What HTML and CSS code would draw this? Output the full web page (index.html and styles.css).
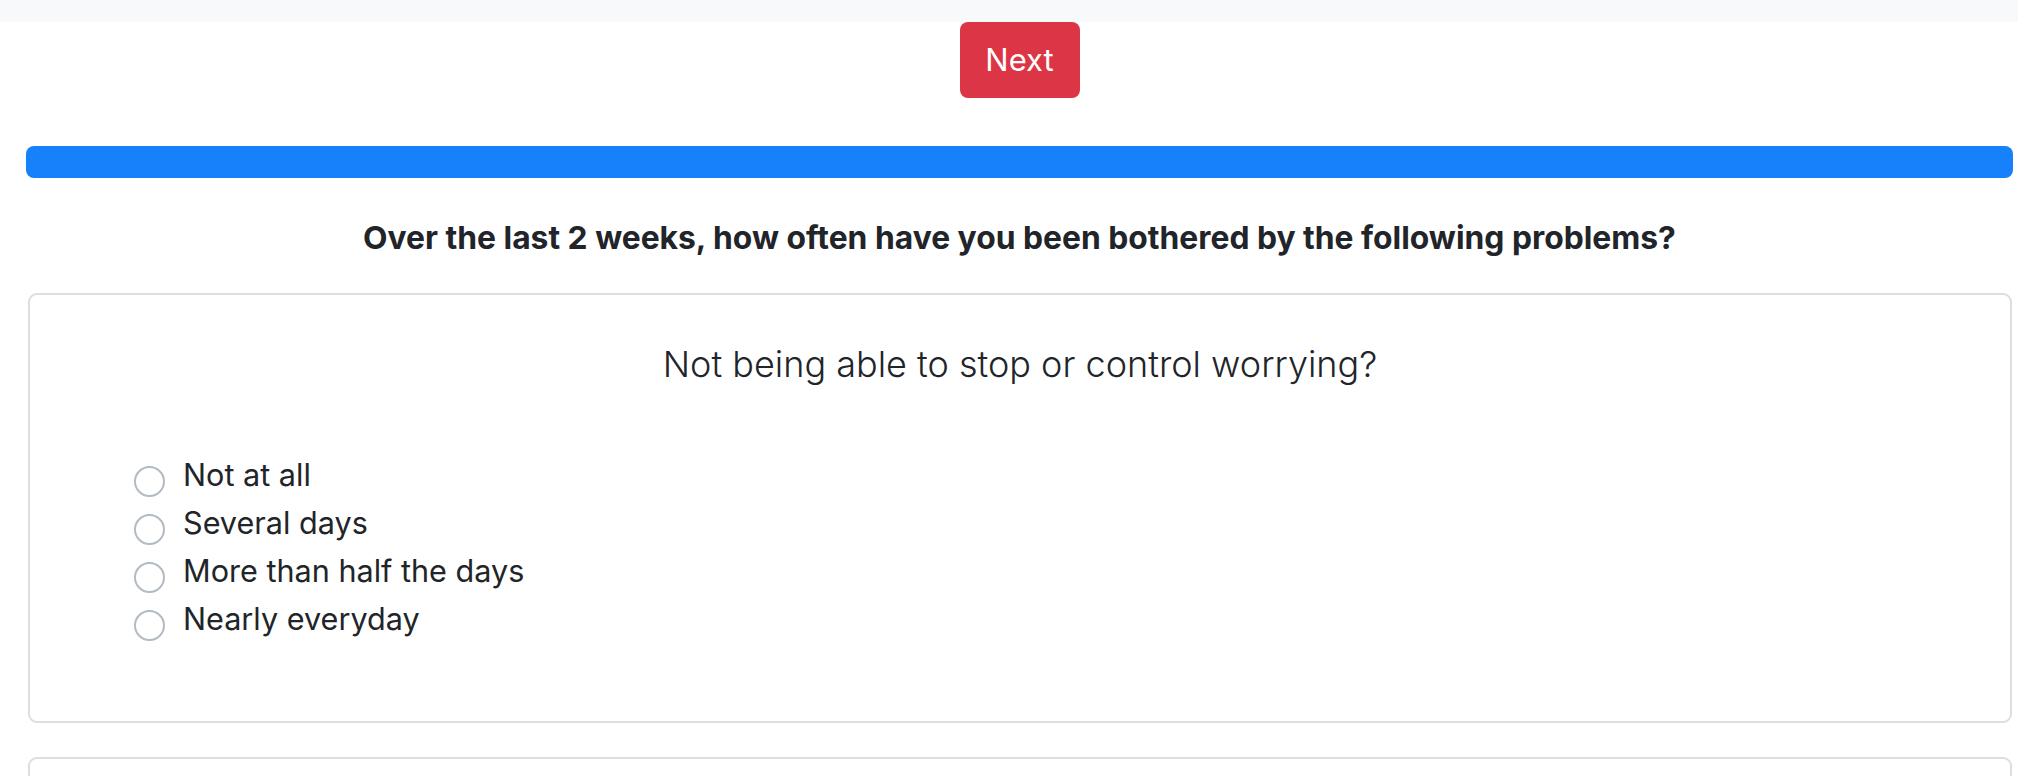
FILE: index.html
```html
<!DOCTYPE html>
<html lang="en">
<head>
<meta charset="utf-8">
<title>Questionnaire</title>
<link rel="stylesheet" href="styles.css">
</head>
<body>
<div class="topbar"></div>
<div class="actions">
  <button class="btn-next" type="button">Next</button>
</div>
<main class="content">
  <div class="progress"><div class="progress-bar" style="width:100%"></div></div>
  <h2 class="intro">Over the last 2 weeks, how often have you been bothered by the following problems?</h2>
  <section class="card">
    <h3 class="question">Not being able to stop or control worrying?</h3>
    <div class="options">
      <label class="option"><input type="radio" name="q1" class="radio"><span>Not at all</span></label>
      <label class="option"><input type="radio" name="q1" class="radio"><span>Several days</span></label>
      <label class="option"><input type="radio" name="q1" class="radio"><span>More than half the days</span></label>
      <label class="option"><input type="radio" name="q1" class="radio"><span>Nearly everyday</span></label>
    </div>
  </section>
  <section class="card card-next"></section>
</main>
</body>
</html>
```
FILE: styles.css
```css
* { box-sizing: border-box; }
html, body {
  margin: 0;
  padding: 0;
  background: #fff;
  color: #212529;
  font-family: Inter, "Noto Sans", "Liberation Sans", sans-serif;
}
.topbar {
  height: 22px;
  background: #f8f9fa;
}
.actions {
  display: flex;
  justify-content: center;
  padding-left: 21px;
}
.btn-next {
  width: 120px;
  height: 76px;
  border: none;
  border-radius: 8px;
  background: #dc3545;
  color: #fff;
  font-family: inherit;
  font-size: 31px;
  line-height: 48px;
  padding: 0;
}
.content {
  padding: 48px 5px 0 26px;
}
.progress {
  height: 32px;
  border-radius: 8px;
  background: #e9ecef;
  overflow: hidden;
}
.progress-bar {
  height: 100%;
  background: #1781fb;
}
.intro {
  margin: 36px 0 31px;
  text-align: center;
  font-size: 31.8px;
  line-height: 48px;
  font-weight: 700;
}
.card {
  margin: 0 1px 34px 2px;
  border: 2px solid #dedede;
  border-radius: 9px;
  padding: 39px 0 78px 104px;
}
.card-next {
  min-height: 200px;
}
.question {
  margin: 0 0 57px -104px;
  text-align: center;
  font-size: 36px;
  line-height: 60px;
  font-weight: 300;
}
.options {
  display: flex;
  flex-direction: column;
}
.option {
  display: flex;
  align-items: center;
  gap: 18px;
  font-size: 30.6px;
  line-height: 48px;
  height: 48px;
}
.radio {
  appearance: none;
  -webkit-appearance: none;
  margin: 0;
  width: 31px;
  height: 31px;
  border: 2px solid #b2bac2;
  border-radius: 50%;
  background: #fff;
  flex: none;
  position: relative;
  top: 6px;
}
```
